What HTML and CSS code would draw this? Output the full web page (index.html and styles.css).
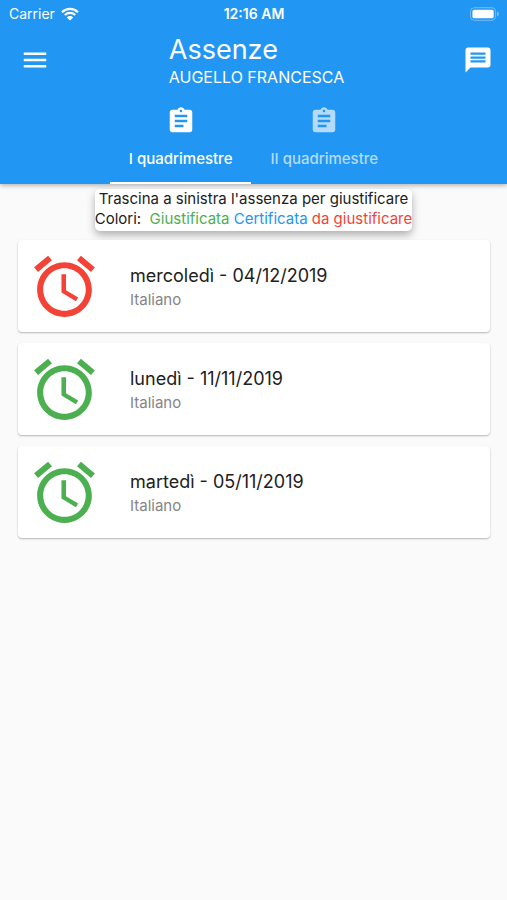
FILE: index.html
```html
<!DOCTYPE html>
<html lang="it">
<head>
<meta charset="utf-8">
<meta name="viewport" content="width=device-width, initial-scale=1">
<title>Assenze</title>
<link rel="stylesheet" href="styles.css">
</head>
<body>
<svg class="sprite" aria-hidden="true">
  <symbol id="alarm" viewBox="0 0 24 24"><path d="M22 5.72l-4.6-3.86-1.29 1.53 4.6 3.86L22 5.72zM7.88 3.39L6.6 1.86 2 5.71l1.29 1.53 4.59-3.85zM12.5 8H11v6l4.75 2.85.75-1.23-4-2.37V8zM12 4c-4.97 0-9 4.03-9 9s4.02 9 9 9c4.97 0 9-4.03 9-9s-4.03-9-9-9zm0 16c-3.87 0-7-3.13-7-7s3.13-7 7-7 7 3.13 7 7-3.13 7-7 7z"/></symbol>
  <symbol id="assignment" viewBox="0 0 24 24"><path d="M19 3h-4.18C14.4 1.84 13.3 1 12 1c-1.3 0-2.4.84-2.82 2H5c-1.1 0-2 .9-2 2v14c0 1.1.9 2 2 2h14c1.1 0 2-.9 2-2V5c0-1.1-.9-2-2-2zm-7 0c.55 0 1 .45 1 1s-.45 1-1 1-1-.45-1-1 .45-1 1-1zm2 14H7v-2h7v2zm3-4H7v-2h10v2zm0-4H7V7h10v2z"/></symbol>
</svg>
<header class="appbar">
  <div class="status">
    <div class="carrier">
      <span>Carrier</span>
      <svg class="wifi" viewBox="0 0 18 14" aria-hidden="true">
        <path d="M1 5.2a11.4 11.4 0 0 1 16 0M3.8 8a7.4 7.4 0 0 1 10.4 0" fill="none" stroke="currentColor" stroke-width="2.2"/>
        <path d="M9 13.6L5.8 10.400a4.600 4.600 0 0 1 6.400 0z" fill="currentColor"/>
      </svg>
    </div>
    <span class="clock">12:16 AM</span>
    <svg class="battery" viewBox="0 0 30 14" aria-hidden="true">
      <rect x=".5" y=".5" width="26" height="13" rx="4" fill="none" stroke="currentColor" opacity=".4"/>
      <rect x="2.500" y="2.500" width="22" height="9" rx="2" fill="currentColor"/>
      <path d="M28 4.500q2 .8 2 2.500t-2 2.500z" fill="currentColor" opacity=".4"/>
    </svg>
  </div>
  <div class="toolbar">
    <button class="icon-button" type="button" aria-label="Menu">
      <svg viewBox="0 0 24 24"><path d="M3 18h18v-2H3v2zm0-5h18v-2H3v2zm0-7v2h18V6H3z"/></svg>
    </button>
    <div class="heading">
      <h1 class="title">Assenze</h1>
      <p class="student">AUGELLO FRANCESCA</p>
    </div>
    <button class="icon-button" type="button" aria-label="Messaggi">
      <svg viewBox="0 0 24 24"><path d="M20 2H4c-1.100 0-1.990.9-1.990 2L2 22l4-4h14c1.100 0 2-.9 2-2V4c0-1.100-.9-2-2-2zM6 6h12v1.800H6zm12 8H6v-1.800h12zm0-3.100H6V9.100h12z"/></svg>
    </button>
  </div>
  <nav class="tabs" role="tablist">
    <button class="tab tab-active" type="button" role="tab" aria-selected="true"><svg><use href="#assignment"/></svg><span>I quadrimestre</span></button>
    <button class="tab" type="button" role="tab" aria-selected="false"><svg><use href="#assignment"/></svg><span>II quadrimestre</span></button>
  </nav>
</header>
<main>
  <div class="legend">
    <p>Trascina a sinistra l'assenza per giustificare</p>
    <p>Colori:&nbsp; <span class="green">Giustificata</span> <span class="blue">Certificata</span> <span class="red">da giustificare</span></p>
  </div>
  <ul class="list">
    <li class="card">
      <svg class="alarm red"><use href="#alarm"/></svg>
      <div class="details"><h2 class="date">mercoledì - 04/12/2019</h2><p class="subject">Italiano</p></div>
    </li>
    <li class="card">
      <svg class="alarm green"><use href="#alarm"/></svg>
      <div class="details"><h2 class="date">lunedì - 11/11/2019</h2><p class="subject">Italiano</p></div>
    </li>
    <li class="card">
      <svg class="alarm green"><use href="#alarm"/></svg>
      <div class="details"><h2 class="date">martedì - 05/11/2019</h2><p class="subject">Italiano</p></div>
    </li>
  </ul>
</main>
</body>
</html>
```
FILE: styles.css
```css
* { box-sizing: border-box; margin: 0; padding: 0; }
body {
  background: #fafafa;
  color: #212121;
  font-family: Inter, Roboto, "Liberation Sans", sans-serif;
}
svg { display: block; fill: currentColor; }
button { background: none; border: 0; color: inherit; font: inherit; cursor: pointer; }
.sprite { position: absolute; width: 0; height: 0; }

.appbar {
  background: #2196f3;
  color: #fff;
  box-shadow: 0 1px 5px rgba(0, 0, 0, .35);
}
.status {
  display: grid;
  grid-template-columns: 1fr auto 1fr;
  align-items: center;
  height: 27px;
  padding: 0 8px 0 9px;
  font-size: 14px;
}
.carrier { display: flex; align-items: center; gap: 6px; }
.wifi { width: 18px; height: 14px; }
.clock { font-weight: 600; }
.battery { width: 29px; height: 14px; justify-self: end; }

.toolbar {
  display: grid;
  grid-template-columns: 1fr auto 1fr;
  align-items: center;
  height: 65px;
  padding: 0 14px 0 20px;
}
.icon-button { width: 30px; height: 30px; }
.icon-button:last-child { justify-self: end; }
.heading { padding-top: 2px; }
.title { font-size: 27px; font-weight: 400; line-height: 32px; }
.student { font-size: 16px; line-height: 22px; }

.tabs { display: flex; justify-content: center; }
.tab {
  display: flex;
  flex-direction: column;
  align-items: center;
  gap: 12px;
  height: 92px;
  padding: 14px 19px 0;
  border-bottom: 2px solid transparent;
  color: #b4dbfb;
  font-size: 15px;
  font-weight: 500;
  line-height: 22px;
}
.tab svg { width: 30px; height: 30px; }
.tab-active { border-color: #fff; color: #fff; }

.legend {
  width: fit-content;
  margin: 5px auto 0;
  padding-bottom: 2px;
  background: #fff;
  border-radius: 5px;
  box-shadow: 0 4px 9px rgba(0, 0, 0, .3);
  font-size: 15px;
  line-height: 20px;
  text-align: center;
}
.green { color: #4caf50; }
.blue { color: #2196f3; }
.red { color: #f44336; }

.list {
  display: grid;
  gap: 11px;
  padding: 9px 17px 20px 18px;
  list-style: none;
}
.card {
  display: flex;
  align-items: center;
  gap: 29px;
  min-height: 92px;
  padding: 0 10px;
  background: #fff;
  border-radius: 4px;
  box-shadow: 0 1px 2px rgba(0, 0, 0, .28);
}
.alarm { width: 73px; height: 73px; }
.details { padding-top: 2px; }
.date { font-size: 18px; font-weight: 400; line-height: 26px; }
.subject { color: #858585; font-size: 15px; line-height: 22px; }
```
